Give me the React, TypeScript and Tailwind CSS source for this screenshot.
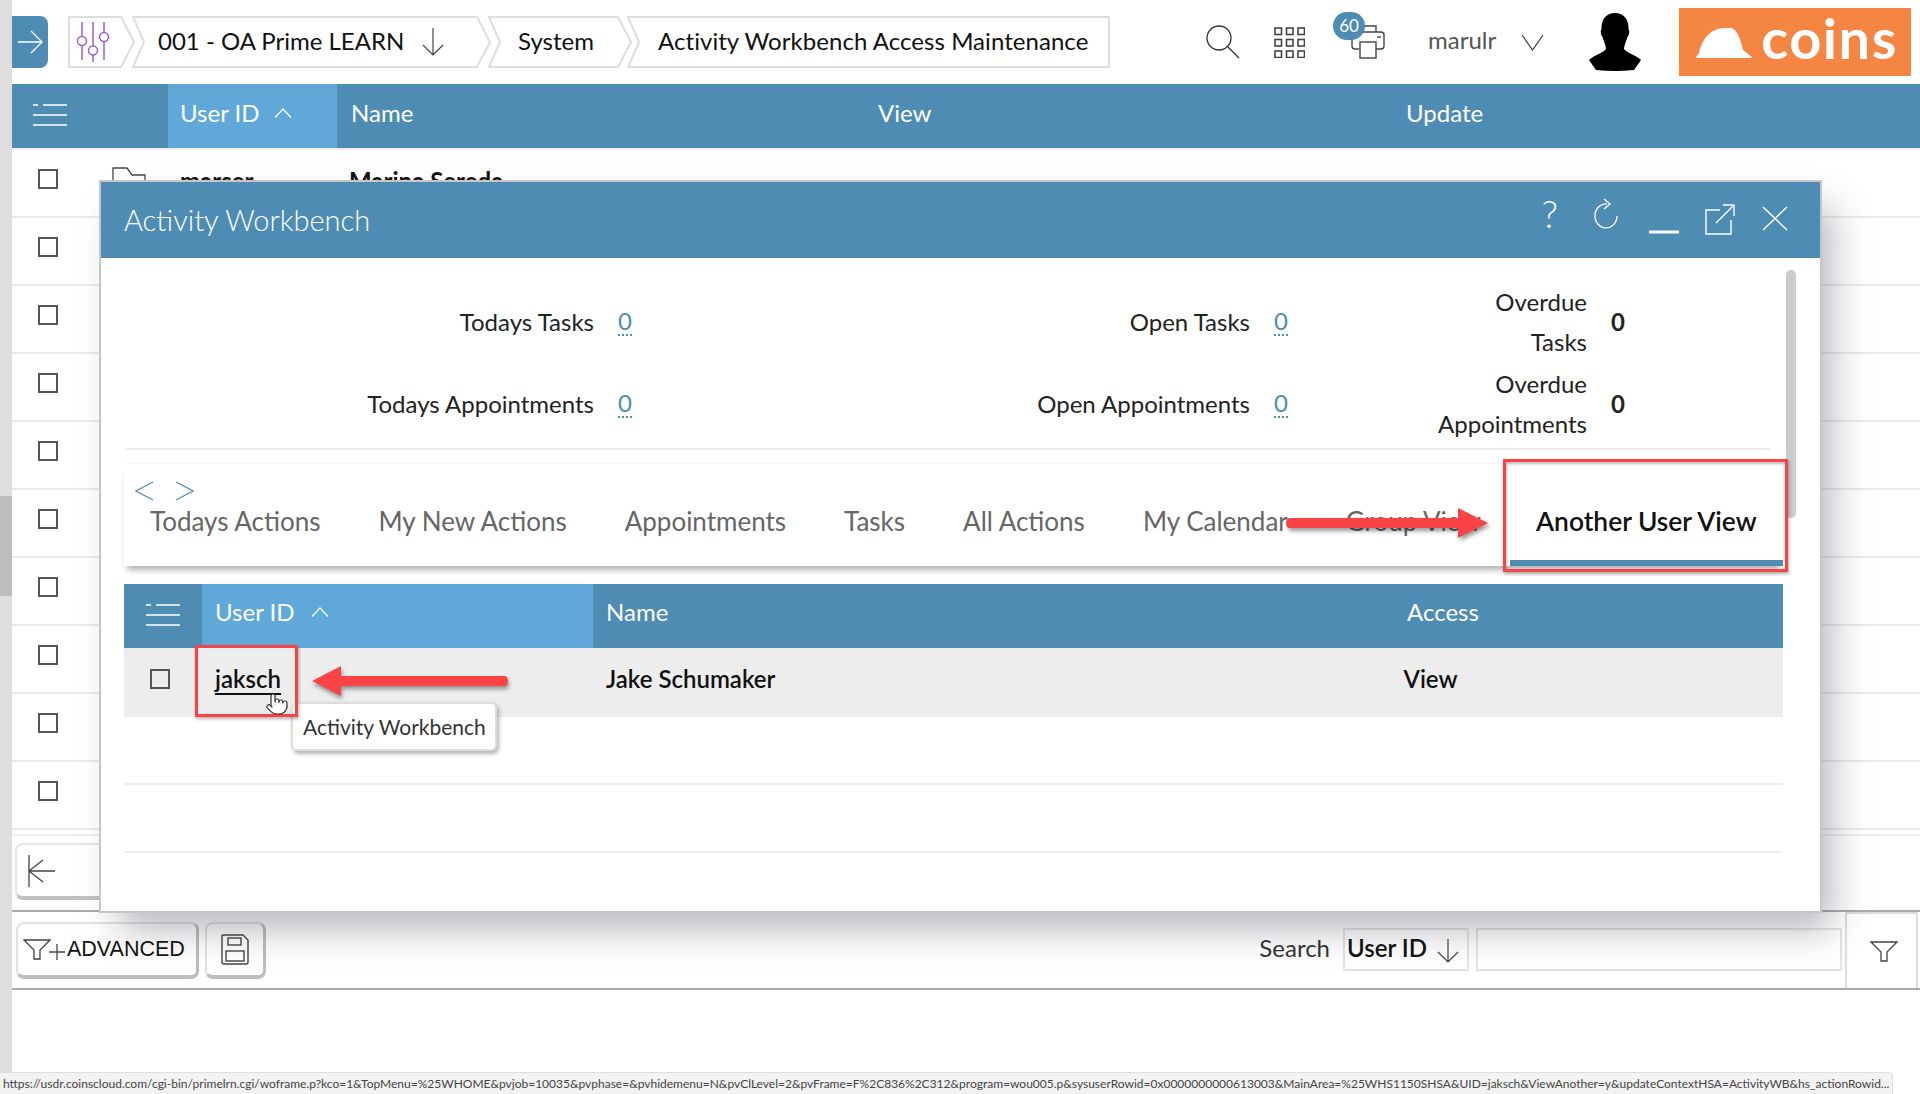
import React from "react";
import { Pointer } from "lucide-react";

const statusUrl =
  "https://usdr.coinscloud.com/cgi-bin/primelrn.cgi/woframe.p?kco=1&TopMenu=%25WHOME&pvjob=10035&pvphase=&pvhidemenu=N&pvClLevel=2&pvFrame=F%2C836%2C312&program=wou005.p&sysuserRowid=0x0000000000613003&MainArea=%25WHS1150SHSA&UID=jaksch&ViewAnother=y&updateContextHSA=ActivityWB&hs_actionRowid...";

const tabs = ["Todays Actions", "My New Actions", "Appointments", "Tasks", "All Actions", "My Calendar", "Group View"];

// thin line icon helper, all the app's icons are 1px-ish outlines
const Line = ({ w, h, d, color = "#333", sw = 1.4, className = "" }: { w: number; h: number; d: string; color?: string; sw?: number; className?: string }) => (
  <svg width={w} height={h} viewBox={`0 0 ${w} ${h}`} fill="none" stroke={color} strokeWidth={sw} className={className}>
    <path d={d} />
  </svg>
);

const MenuIcon = () => <Line w={34} h={22} color="#fff" sw={1.6} d="M0 1H5M10 1H34M0 11H34M0 21H34" />;
const SortUp = ({ className = "" }: { className?: string }) => <Line w={18} h={10} color="#fff" sw={1.3} className={className} d="M1 9.5L9 1L17 9.5" />;
const Check = ({ className = "" }: { className?: string }) => (
  <div className={`w-5 h-5 border-2 border-[#555] shrink-0 ${className}`} />
);
const Funnel = ({ className = "" }: { className?: string }) => (
  <Line w={28} h={21} color="#444" sw={1.3} className={className} d="M1 1H27L17 11V20H11V11Z" />
);

const Crumb = ({ w, first, last, className = "", children }: { w: number; first?: boolean; last?: boolean; className?: string; children: React.ReactNode }) => {
  const left = first ? "" : "L12 26";
  const right = last ? `H${w - 1}V51` : `H${w - 14}L${w - 1} 26L${w - 14} 51`;
  return (
    <div className={`relative h-[52px] flex items-center shrink-0 ${className}`}>
      <svg width={w} height={52} viewBox={`0 0 ${w} 52`} fill="#fff" stroke="#dedede" strokeWidth={2} className="absolute inset-0">
        <path d={`M1 1${right}H1${left}Z`} />
      </svg>
      <div className="relative flex items-center">{children}</div>
    </div>
  );
};

const TopBar = () => (
  <div className="h-[84px] flex items-center shrink-0">
    <div className="w-9 h-[52px] bg-[#4f8cb3] rounded-r-lg flex items-center justify-center">
      <Line w={26} h={24} color="#fff" sw={1.3} d="M1 12H25M14 1L25 12L14 23" />
    </div>
    <Crumb w={67} first className="ml-5 w-[67px]">
      <svg width={34} height={40} viewBox="0 0 34 40" fill="none" stroke="#a45fc9" strokeWidth={1.5} className="ml-2">
        <path d="M6 0V14M6 24V38M17 0V24M17 33V40M28 0V10M28 20V38" />
        <circle cx={6} cy={19} r={4.5} />
        <circle cx={17} cy={28.5} r={4.5} />
        <circle cx={28} cy={15} r={4.5} />
      </svg>
    </Crumb>
    <Crumb w={359} className="-ml-[3px] w-[359px]">
      <span className="ml-[26px] -mt-[2px] text-[24px] text-[#111]">001 - OA Prime LEARN</span>
      <Line w={24} h={30} color="#444" sw={1.2} className="ml-[17px]" d="M12 1V28M2 18L12 28L22 18" />
    </Crumb>
    <Crumb w={144} className="-ml-[3px] w-[144px]">
      <span className="ml-[30px] -mt-[2px] text-[24px] text-[#111]">System</span>
    </Crumb>
    <Crumb w={483} last className="-ml-[5px] w-[483px]">
      <span className="ml-[31px] -mt-[2px] text-[24px] text-[#111] whitespace-nowrap tracking-[0.05px]">Activity Workbench Access Maintenance</span>
    </Crumb>

    <Line w={34} h={34} color="#333" sw={1.3} className="ml-[96px]" d="M22 22L33 33M25 13A12 12 0 1 1 1 13A12 12 0 1 1 25 13Z" />
    <svg width={31} height={31} viewBox="0 0 31 31" fill="none" stroke="#444" strokeWidth={1.6} className="ml-[34px]">
      {[0, 11.5, 23].map((y) =>
        [0, 11.5, 23].map((x) => <rect key={`${x}-${y}`} x={x + 1} y={y + 1} width={6.5} height={6.5} />)
      )}
    </svg>
    <div className="relative ml-[46px] w-[34px] h-[34px]">
      <svg width={34} height={34} viewBox="0 0 34 34" fill="#fff" stroke="#444" strokeWidth={1.4}>
        <path d="M12 7V1H25V7" />
        <path d="M8 24H4Q1 24 1 21V10Q1 7 4 7H30Q33 7 33 10V21Q33 24 30 24H25" />
        <path d="M26 12H30" />
        <rect x={9} y={17} width={16} height={16} />
      </svg>
      <div className="absolute -left-[18px] -top-[13px] w-[32px] h-[28px] rounded-full bg-[#4f8cb3] text-white text-[17px] leading-[28px] text-center">60</div>
    </div>
    <span className="ml-[43px] -mt-[5px] text-[24px] text-[#555]">marulr</span>
    <Line w={23} h={17} color="#444" sw={1.3} className="ml-[25px]" d="M1 1L11.5 16L22 1" />
    <svg width={52} height={58} viewBox="0 0 52 58" fill="#000" className="ml-[45px]">
      <path d="M26 0C36 0 40 8 39.5 16C41 18 40 22 38.5 24C37 29 35 33 35 36C38 40 47 42 52 47L45 57Q26 59 7 57L0 47C5 42 14 40 17 36C17 33 15 29 13.5 24C12 22 11 18 12.5 16C12 8 16 0 26 0Z" />
    </svg>
    <div className="ml-[38px] w-[232px] h-[68px] bg-[#f58542] flex items-center text-white">
      <svg width={56} height={30} viewBox="0 0 56 30" fill="#fff" className="ml-[17px] mt-[2px]">
        <path d="M0 29L3 25C6 12 13 1 28 0L36 0C43 4 45 14 47 22L56 29Q56 30 52 30L4 30Q0 30 0 29Z" />
      </svg>
      <span className="ml-[9px] text-[56px] leading-[60px] font-bold tracking-[1.5px] -mt-[8px]">coins</span>
    </div>
  </div>
);

const BackRow = ({ first }: { first?: boolean }) => (
  <div className="h-[68px] border-b-2 border-[#eaeaea] flex items-start shrink-0">
    <Check className="ml-[26px] mt-[19px]" />
    {first && (
      <>
        <Line w={34} h={26} color="#444" sw={1.3} className="ml-[54px] mt-[17px]" d="M1 25V1H15L20 8H33V25Z" />
        <span className="ml-[34px] mt-[13px] text-[24px] font-bold text-[#111]">marser</span>
        <span className="absolute left-[349px] mt-[13px] text-[24px] font-bold text-[#111]">Marina Sereda</span>
      </>
    )}
  </div>
);

const Stat = ({ label, value, plain }: { label: React.ReactNode; value: string; plain?: boolean }) => (
  <>
    <div className="text-right text-[24px] leading-[40px] text-[#222] self-center">{label}</div>
    <div className="self-center text-[24px] leading-[26px]">
      {plain ? (
        <span className="font-bold text-[#222]">{value}</span>
      ) : (
        <span className="inline-block border-b-2 border-dotted border-[#4f8cb3] text-[#4f8cb3]">{value}</span>
      )}
    </div>
  </>
);

const Modal = () => (
  <div className="absolute left-[99px] top-[180px] w-[1723px] h-[733px] bg-white border-2 border-[#c6c6c6] flex flex-col shadow-[15px_22px_35px_-5px_rgba(60,50,70,0.35)]">
    <div className="h-[76px] bg-[#4f8cb3] flex items-center shrink-0">
      <span className="ml-[23px] text-[29px] font-light text-white">Activity Workbench</span>
      <span className="ml-auto text-[38px] font-light text-white leading-none -mt-[14px]">?</span>
      <Line w={26} h={32} color="#fff" sw={1.3} className="ml-[35px] -mt-[13px]" d="M14 6A11 12 0 1 0 24 18M11 1L17 6L11 11" />
      <Line w={30} h={4} color="#fff" sw={3} className="ml-[30px] mt-[24px]" d="M0 2H30" />
      <Line w={30} h={31} color="#fff" sw={1.4} className="ml-[26px] -mt-[2px]" d="M15 6H1V30H26V16M11 19L28 2M18 1H29V12" />
      <Line w={26} h={25} color="#fff" sw={1.4} className="ml-[27px] mr-[32px] -mt-[4px]" d="M1 1L25 24M25 1L1 24" />
    </div>
    <div className="relative flex-1 flex flex-col">
      <div className="absolute right-[24px] top-[12px] w-[10px] h-[248px] rounded-full bg-[#cbcbcb]" />
      <div className="ml-6 mt-6 h-[162px] grid grid-cols-[469px_40px_568px_139px_150px_40px] grid-rows-[80px_80px] gap-x-6 gap-y-[2px]">
        <Stat label="Todays Tasks" value="0" />
        <Stat label="Open Tasks" value="0" />
        <Stat label={<>Overdue<br />Tasks</>} value="0" plain />
        <Stat label="Todays Appointments" value="0" />
        <Stat label="Open Appointments" value="0" />
        <Stat label={<>Overdue<br />Appointments</>} value="0" plain />
      </div>
      <div className="ml-6 mt-[4px] h-[2px] w-[1645px] bg-[#ececec]" />
      <div className="ml-[23px] mt-[13px] w-[1659px] h-[103px] border-t border-[#f6f6f6] bg-white shadow-[0_7px_6px_-3px_rgba(0,0,0,0.3)] shrink-0">
        <div className="ml-[11px] mt-[15px] h-[24px] flex items-center gap-[21px]">
          <Line w={19} h={20} color="#4f8cb3" sw={1.2} d="M18 1L1 10L18 19" />
          <Line w={19} h={20} color="#4f8cb3" sw={1.2} d="M1 1L18 10L1 19" />
        </div>
        <div className="h-[63px] flex">
          {tabs.map((t, i) => (
            <div key={t} className={`${i === 0 ? "pl-[26px]" : "pl-[29px]"} pr-[29px] text-[26px] leading-[36px] text-[#666] whitespace-nowrap`}>{t}</div>
          ))}
          <div className="ml-auto w-[273px] shrink-0 h-[63px] border-b-[6px] border-[#4f8cb3] pl-[26px] text-[26.4px] leading-[36px] font-semibold text-[#111] whitespace-nowrap">Another User View</div>
        </div>
      </div>
      <div className="ml-[23px] mt-[18px] w-[1659px] h-16 bg-[#4f8cb3] flex items-center text-white text-[24px] shrink-0">
        <div className="w-[78px] flex justify-center pb-[2px]"><MenuIcon /></div>
        <div className="w-[391px] h-full bg-[#5fa8d7] flex items-center pl-[13px] pb-[8px]">
          User ID
          <SortUp className="ml-[16px]" />
        </div>
        <div className="w-[814px] pl-[13px] pb-[8px]">Name</div>
        <div className="pb-[8px]">Access</div>
      </div>
      <div className="ml-[23px] w-[1659px] h-[69px] bg-[#ededed] flex items-center pb-[8px] text-[24px] font-semibold text-[#111] shrink-0">
        <Check className="ml-[26px]" />
        <span className="ml-[45px] underline underline-offset-[5px] decoration-2">jaksch</span>
        <span className="ml-[325px]">Jake Schumaker</span>
        <span className="ml-[628px]">View</span>
      </div>
      <div className="ml-[23px] w-[1659px] h-[68px] border-b-2 border-[#ececec] shrink-0" />
      <div className="ml-[23px] w-[1659px] h-[68px] border-b-2 border-[#ececec] shrink-0" />
    </div>
  </div>
);

const Annotations = () => (
  <>
    <div className="absolute left-[291px] top-[702px] w-[206px] h-[49px] bg-white border-2 border-[#ddd] rounded-md shadow-[2px_3px_4px_rgba(0,0,0,0.3)] flex items-center pl-[10px] text-[21px] text-[#333] whitespace-nowrap">Activity Workbench</div>
    <div className="absolute left-[1503px] top-[459px] w-[285px] h-[113px] border-[3px] border-[#fa4347] shadow-[1px_2px_3px_rgba(0,0,0,0.3),inset_1px_2px_3px_rgba(0,0,0,0.25)]" />
    <div className="absolute left-[195px] top-[645px] w-[103px] h-[72px] border-[3px] border-[#fa4347] shadow-[1px_2px_3px_rgba(0,0,0,0.3)]" />
    <svg width={202} height={32} viewBox="0 0 202 32" fill="#fa4347" className="absolute left-[1286px] top-[507px] drop-shadow-[2px_3px_2px_rgba(0,0,0,0.4)]">
      <path d="M4 11H172V1L202 16L172 31V21H4Q0 21 0 16Q0 11 4 11Z" />
    </svg>
    <svg width={196} height={30} viewBox="0 0 196 30" fill="#fa4347" className="absolute left-[312px] top-[666px] drop-shadow-[1px_3px_2px_rgba(0,0,0,0.4)]">
      <path d="M192 10H29V0L0 15L29 30V20H192Q196 20 196 15Q196 10 192 10Z" />
    </svg>
    <Pointer size={24} strokeWidth={1.2} color="#333" fill="#fff" className="absolute left-[265px] top-[692px]" />
  </>
);

export default function App() {
  return (
    <div className="relative w-[1920px] h-[1094px] overflow-hidden bg-white flex font-['Lato',sans-serif]">
      <div className="w-3 flex flex-col shrink-0">
        <div className="h-[496px] bg-[#dedede]" />
        <div className="h-[100px] bg-[#bdbdbd]" />
        <div className="flex-1 bg-[#dedede]" />
      </div>
      <div className="flex-1 flex flex-col min-w-0">
        <TopBar />
        <div className="h-16 bg-[#4f8cb3] flex items-center text-white text-[24px] shrink-0">
          <div className="w-[156px] pl-[21px] pb-[2px]"><MenuIcon /></div>
          <div className="w-[169px] h-full bg-[#5fa8d7] flex items-center pl-[12px] pb-[7px]">
            User ID
            <SortUp className="ml-[14px]" />
          </div>
          <div className="w-[541px] pl-[14px] pb-[7px]">Name</div>
          <div className="w-[528px] pb-[7px]">View</div>
          <div className="pb-[7px]">Update</div>
        </div>
        <div className="h-[2px] bg-[#eee] shrink-0" />
        {Array.from({ length: 10 }).map((_, i) => (
          <BackRow key={i} first={i === 0} />
        ))}
        <div className="h-[78px] mt-[4px] border-t-2 border-[#eee] border-b-2 border-b-[#aaa] shrink-0">
          <div className="ml-[3px] mt-[7px] w-[240px] h-[57px] border-2 border-[#e6e6e6] border-b-[4px] border-b-[#c0c0c0] rounded-lg flex items-center">
            <Line w={28} h={32} color="#444" sw={1.3} className="ml-[11px]" d="M1 0V32M27 16H1M15 5L1 16L15 27" />
          </div>
        </div>
        <div className="h-[78px] border-b-2 border-[#aaa] flex items-center shrink-0">
          <div className="ml-1 w-[183px] h-[57px] border-2 border-[#e2e2e2] border-b-[4px] border-b-[#bdbdbd] border-r-[3px] border-r-[#bdbdbd] rounded-lg flex items-center">
            <Funnel className="ml-[5px]" />
            <Line w={16} h={16} color="#444" sw={1.3} className="-ml-[2px] mt-[6px]" d="M8 0V16M0 8H16" />
            <span className="ml-[2px] mt-[1px] text-[21.5px] text-[#111] font-['Liberation_Sans',sans-serif]">ADVANCED</span>
          </div>
          <div className="ml-[6px] w-[61px] h-[57px] border-2 border-[#e2e2e2] border-b-[4px] border-b-[#bdbdbd] border-r-[3px] border-r-[#bdbdbd] rounded-lg flex items-center justify-center">
            <svg width={28} height={31} viewBox="0 0 28 31" fill="none" stroke="#444" strokeWidth={1.4}>
              <path d="M2 1H22L27 6V28Q27 30 25 30H3Q1 30 1 28V2Q1 1 2 1Z" />
              <rect x={7} y={4} width={13} height={7} />
              <rect x={5} y={17} width={18} height={10} />
            </svg>
          </div>
          <span className="ml-auto -mt-[5px] text-[24px] text-[#333]">Search</span>
          <div className="ml-[13px] w-[126px] h-[43px] -mt-[1px] border-2 border-[#e4e4e4] flex items-center text-[24px] font-semibold text-[#111]">
            <span className="ml-[2px] -mt-[3px]">User ID</span>
            <Line w={24} h={24} color="#444" sw={1.2} className="ml-[9px] mt-[2px]" d="M12 0V23M2 13L12 23L22 13" />
          </div>
          <div className="ml-[7px] w-[366px] h-[43px] -mt-[1px] border-2 border-[#e4e4e4]" />
          <div className="ml-[3px] mr-[2px] w-[73px] h-full -mt-[2px] mb-[-2px] pl-[4px] border-x-2 border-t-2 border-[#ddd] flex items-center justify-center">
            <Funnel />
          </div>
        </div>
      </div>
      <Modal />
      <Annotations />
      <div className="absolute left-0 bottom-0 w-[1893px] h-[22px] bg-[#f2f2f2] border-t border-r border-[#dedede] rounded-tr-sm pl-[3px] text-[12px] leading-[22px] text-[#444] whitespace-nowrap overflow-hidden">
        {statusUrl}
      </div>
    </div>
  );
}
